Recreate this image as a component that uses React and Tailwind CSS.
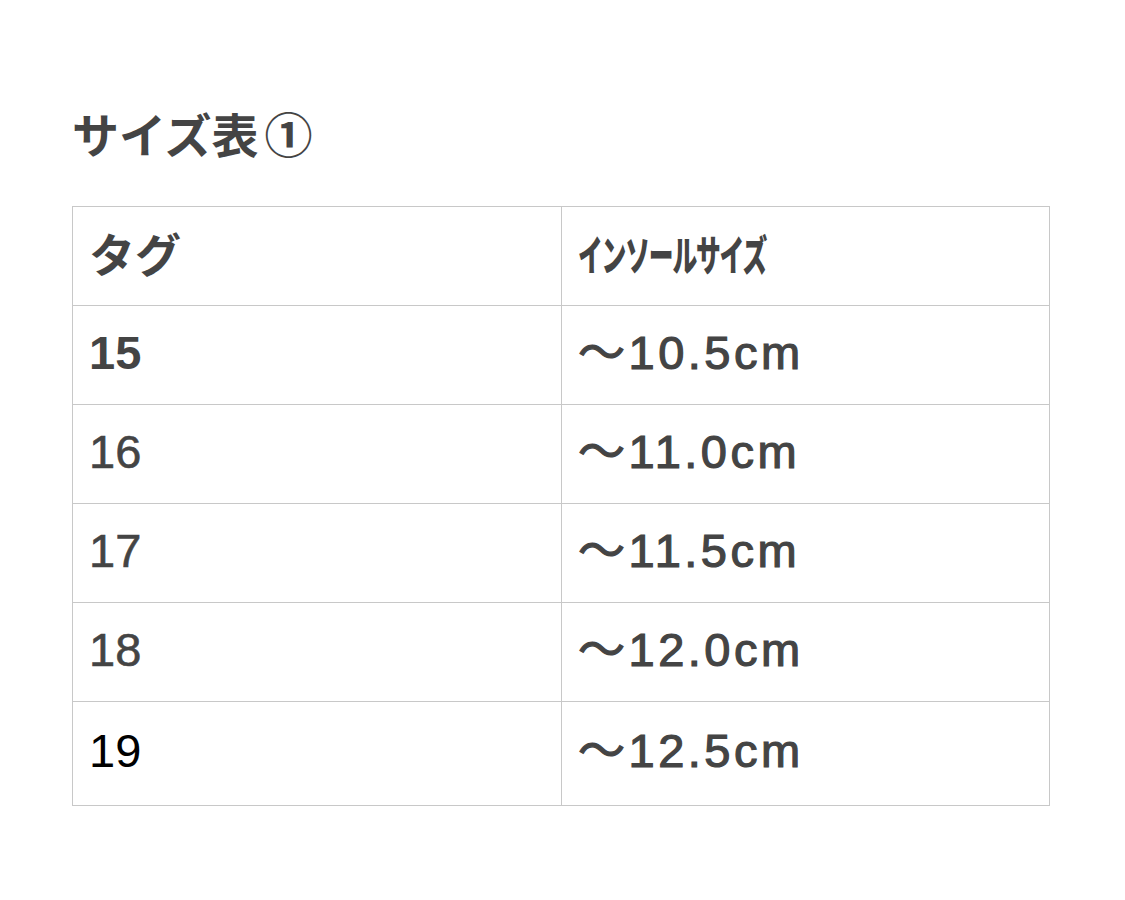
const rows = [
  { tag: "15", size: "〜10.5cm", tagClass: "font-bold text-[#444]" },
  { tag: "16", size: "〜11.0cm", tagClass: "text-[#444] [-webkit-text-stroke:0.6px_#444]" },
  { tag: "17", size: "〜11.5cm", tagClass: "text-[#444] [-webkit-text-stroke:0.6px_#444]" },
  { tag: "18", size: "〜12.0cm", tagClass: "text-[#444] [-webkit-text-stroke:0.6px_#444]" },
  { tag: "19", size: "〜12.5cm", tagClass: "text-black" },
];

const font = {
  fontFamily: '"Liberation Sans", "Noto Sans CJK JP", sans-serif',
};

export default function App() {
  return (
    <div className="min-h-screen bg-white px-[72px] pt-[108px]" style={font}>
      {/* TITLE */}
      <h1 className="text-[47px] font-bold leading-[58px] text-[#444] mb-[40px] flex items-center gap-[6px]">
        <span>サイズ表</span>
        <span className="text-[48px]">①</span>
      </h1>

      {/* TABLE */}
      <table className="w-[978px] border-collapse table-fixed">
        <thead>
          <tr className="h-[99px]">
            <th className="w-[489px] border border-[#c8c8c8] pl-[16px] text-left align-middle text-[46px] font-bold text-[#444]">
              タグ
            </th>
            <th className="border border-[#c8c8c8] pl-[16px] text-left align-middle text-[#444]">
              <span className="inline-block origin-left scale-x-[0.59] whitespace-nowrap text-[42px] font-black tracking-[-2px]">
                インソールサイズ
              </span>
            </th>
          </tr>
        </thead>
        <tbody>
          {rows.map((r, i) => (
            <tr key={r.tag} className={i === rows.length - 1 ? "h-[104px]" : "h-[99px]"}>
              <td className={`border border-[#c8c8c8] pl-[16px] pb-[4px] align-middle text-[47px] ${r.tagClass}`}>
                {r.tag}
              </td>
              <td className="border border-[#c8c8c8] pl-[16px] pb-[4px] align-middle text-[47px] tracking-[3.5px] text-[#444] [-webkit-text-stroke:1.2px_#444]">
                {r.size}
              </td>
            </tr>
          ))}
        </tbody>
      </table>
    </div>
  );
}
